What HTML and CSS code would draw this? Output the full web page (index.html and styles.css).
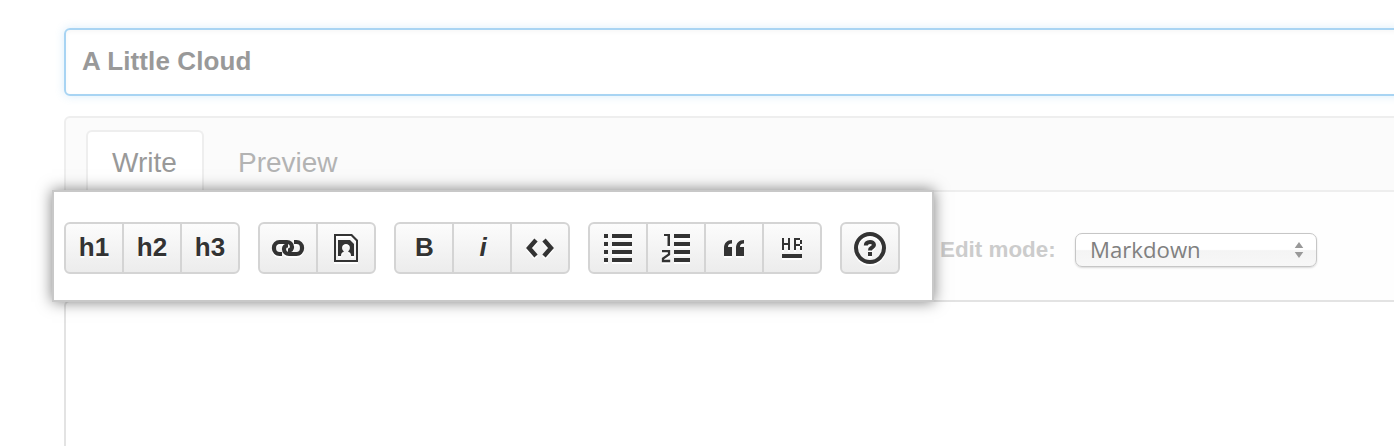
FILE: index.html
```
<!DOCTYPE html>
<html lang="en">
<head>
<meta charset="utf-8">
<title>Edit page</title>
<link rel="stylesheet" href="styles.css">
</head>
<body>
<main class="page">
  <div class="title-field"><span class="title-text">A Little Cloud</span></div>
  <section class="editor">
    <nav class="tabs">
      <a class="tab tab-active"><span class="tab-write">Write</span></a>
      <a class="tab"><span class="tab-preview">Preview</span></a>
    </nav>
    <div class="bar">
      <div class="toolbar">
        <div class="group">
          <button class="btn">h1</button><button class="btn">h2</button><button class="btn">h3</button>
        </div>
        <div class="group">
          <button class="btn" aria-label="Link"><svg class="icon" viewBox="0 0 36 36"><g fill="none" stroke="#333" stroke-width="4.200"><path d="M12 24H9.500a5.500 5.500 0 0 1-5.500-5.500v-1a5.500 5.500 0 0 1 5.500-5.500H17a5 5 0 0 1 5 5c0 2-1.200 3.500-4 3.500"/><path d="M24 12h2.500a5.500 5.500 0 0 1 5.500 5.500v1a5.500 5.500 0 0 1-5.500 5.500H19a5 5 0 0 1-5-5c0-2 1.200-3.500 4-3.500"/></g></svg></button>
          <button class="btn" aria-label="Image"><svg class="icon" viewBox="0 0 36 36"><path fill="#333" fill-rule="evenodd" d="M6 4h18l6 6v22H6zM8 6v24h20V11l-5-5z"/><path fill="#333" fill-rule="evenodd" d="M10 10h12l4 4v12h-3c0-3-1-3.500-3-4.500 3-2 2.500-7.500-2-7.500s-5 5.500-2 7.500c-2 1-3 1.500-3 4.500h-3z"/></svg></button>
        </div>
        <div class="group">
          <button class="btn bold">B</button>
          <button class="btn italic">i</button>
          <button class="btn" aria-label="Code"><svg class="icon" viewBox="0 0 36 36"><path fill="none" stroke="#333" stroke-width="4.400" d="M14 10 7 18l7 8M22 10l7 8-7 8"/></svg></button>
        </div>
        <div class="group">
          <button class="btn" aria-label="Bulleted list"><svg class="icon" viewBox="0 0 36 36"><path fill="#333" d="M4 4h4v4H4zM12 4h20v4H12zM4 12h4v4H4zM12 12h20v4H12zM4 20h4v4H4zM12 20h20v4H12zM4 28h4v4H4zM12 28h20v4H12z"/></svg></button>
          <button class="btn" aria-label="Numbered list"><svg class="icon" viewBox="0 0 36 36"><path fill="#333" d="M16 4h16v4H16zM16 12h16v4H16zM16 20h16v4H16zM16 28h16v4H16zM6 4h6v12H9.500V6H6z"/><path fill="none" stroke="#333" stroke-width="2.300" d="M4 21.200h7v3.300l-6 4V31h7.200"/></svg></button>
          <button class="btn" aria-label="Quote"><svg class="icon" viewBox="0 0 36 36"><path fill="#333" d="M16 10v3.500c-3 0-4 1.500-4 3.500h4v9H8v-8c0-5 3-8 8-8zM28 10v3.500c-3 0-4 1.500-4 3.500h4v9h-8v-8c0-5 3-8 8-8z"/></svg></button>
          <button class="btn" aria-label="Horizontal rule"><svg class="icon" viewBox="0 0 36 36"><path fill="#333" d="M8 24h20v4H8zM8 8h2v5h4V8h2v12h-2v-5h-4v5H8z"/><path fill="#333" fill-rule="evenodd" d="M20 8h6v2h2v4h-2v2h2v4h-2v-4h-4v4h-2zm2 2v4h4v-4z"/></svg></button>
        </div>
        <div class="group">
          <button class="btn btn-help" aria-label="Help"><svg class="icon" viewBox="0 0 36 36"><circle cx="18" cy="18" r="14" fill="none" stroke="#333" stroke-width="4"/><path fill="none" stroke="#333" stroke-width="4" d="M13.800 15.500c.2-4.500 8.200-4.500 8.200-.5 0 2.500-4 2-4 5.500"/><path fill="#333" d="M16 22h4v4h-4z"/></svg></button>
        </div>
      </div>
      <div class="mode">
        <span class="mode-label">Edit mode:</span>
        <div class="select"><span class="select-text">Markdown</span><svg class="arrows" viewBox="0 0 10 16"><path fill="#999" d="M5 0l4.300 6H.7zM5 16l4.300-6H.7z"/></svg></div>
      </div>
    </div>
    <div class="content"></div>
  </section>
</main>
</body>
</html>
```
FILE: styles.css
```
* { box-sizing: border-box; }
body {
  margin: 0;
  background: #fff;
  font-family: "Liberation Sans", Arial, sans-serif;
  overflow: hidden;
}
.page {
  width: 1420px;
  height: 446px;
  padding: 28px 0 0 64px;
  overflow: hidden;
}
.title-field {
  height: 68px;
  display: flex;
  align-items: center;
  padding: 0 0 2px 16px;
  border: 2px solid #a8d4f3;
  border-radius: 6px;
  box-shadow: inset 0 2px 4px rgba(0, 0, 0, .035), 0 0 10px rgba(81, 167, 232, .22);
  color: #999;
  font-size: 26px;
  font-weight: bold;
  letter-spacing: .1px;
}
.editor { margin-top: 20px; }
.tabs {
  height: 76px;
  display: flex;
  padding: 12px 0 0 20px;
  background: #fbfbfb;
  border: 2px solid #eee;
  border-radius: 6px 0 0 0;
}
.tab {
  height: 62px;
  display: flex;
  align-items: center;
  padding: 3px 24px 0 34px;
  color: #b3b3b3;
  font-size: 28px;
}
.tab-active {
  width: 118px;
  padding: 1px 0 0 24px;
  color: #999;
  background: #fff;
  border: 2px solid #eee;
  border-bottom: 0;
  border-radius: 6px 6px 0 0;
}
.bar {
  height: 108px;
  display: flex;
  align-items: center;
  background: #fefefe;
}
.toolbar {
  position: relative;
  flex: none;
  width: 882px;
  height: 112px;
  margin-left: -12px;
  padding: 4px 0 0 10px;
  display: flex;
  align-items: center;
  gap: 18px;
  background: #fff;
  border: 2px solid #c8c8c8;
  box-shadow: 0 0 14px rgba(0, 0, 0, .5);
}
.group {
  display: flex;
  height: 52px;
  border: 2px solid #d4d4d4;
  border-radius: 6px;
  background: linear-gradient(#fcfcfc, #ececec);
}
.btn {
  width: 58px;
  display: flex;
  align-items: center;
  justify-content: center;
  padding: 0 0 2px;
  border: 0;
  border-left: 2px solid #d4d4d4;
  background: none;
  color: #333;
  font: bold 26px "Liberation Sans", Arial, sans-serif;
  text-shadow: 0 2px 0 rgba(255, 255, 255, .9);
}
.btn:first-child { width: 56px; border-left: 0; }
.italic { font-style: italic; padding-left: 2px; }
.bold { padding-left: 1px; }
.icon {
  width: 36px;
  height: 36px;
  flex: none;
  margin-bottom: -2px;
  filter: drop-shadow(0 2px 0 rgba(255, 255, 255, .9));
}
.mode {
  display: flex;
  align-items: center;
  padding: 8px 0 0 6px;
}
.mode-label {
  width: 135px;
  color: #ccc;
  font-size: 22.4px;
  font-weight: bold;
}
.select {
  width: 242px;
  height: 34px;
  display: flex;
  align-items: center;
  justify-content: space-between;
  padding: 0 12px 0 14px;
  border: 1px solid #c6c6c6;
  border-radius: 7px;
  background: linear-gradient(#fff 48%, #f4f4f4 52%, #f7f7f7);
  box-shadow: 0 1px 2px rgba(0, 0, 0, .15);
  color: #808080;
  font: 22.2px "Open Sans", "Noto Sans", sans-serif;
}
.select-text { padding-bottom: 2px; }
.group .btn-help { width: 56px; }
.arrows { width: 10px; height: 16px; }
.content {
  height: 200px;
  border: 2px solid #e3e3e3;
  border-radius: 6px 0 0 0;
}
```
